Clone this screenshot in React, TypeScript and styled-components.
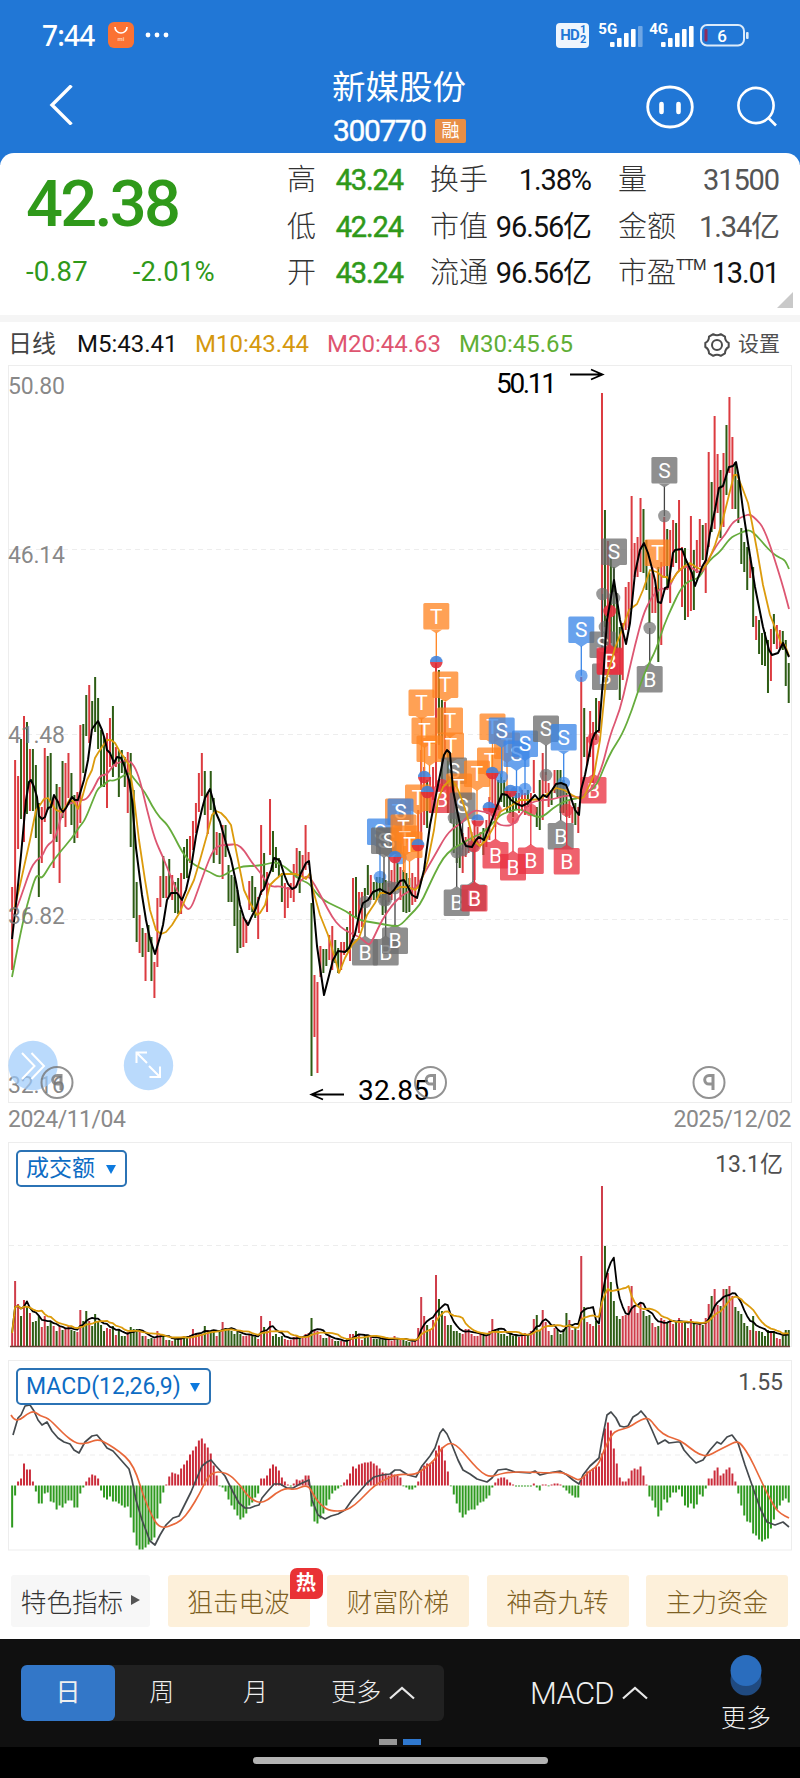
import React, { FC } from 'react';
import styled, { createGlobalStyle, css } from 'styled-components';

const colors = {
    blue: '#2177d6',
    up: '#dc3b40',
    down: '#2d5c14',
    price: '#2f991a',
    grey: '#8a8a8a',
    text: '#505050',
    line: '#ededed',
    link: '#0d6cc4',
    cream: '#fdf0da',
    brown: '#7d5f22',
};

const GlobalStyle = createGlobalStyle`
    * {
        box-sizing: border-box;
    }

    body {
        margin: 0;
        background: #fff;
        font-family: Roboto, 'Noto Sans CJK SC', sans-serif;
    }

    svg {
        display: block;
        flex-shrink: 0;
    }
`;

/* ---------- chart data, one entry per trading day ---------- */

const CANDLES = (
    'r887-970 r760-908 r776-849 g739-819 r716-842 g722-814 r749-811 g749-811 g765-838 g803-897 ' +
    'r807-863 r748-822 g756-810 g753-834 r797-868 g784-842 r787-883 g761-818 r763-827 r753-798 ' +
    'g773-825 g795-843 r792-838 r725-823 g724-773 g695-736 r685-743 g701-728 g677-732 g698-749 ' +
    'g730-787 g737-787 r733-808 r718-767 g706-777 r747-767 g750-797 g750-773 g757-787 r752-813 ' +
    'g753-847 g790-918 g882-942 r915-953 g928-957 r933-981 g925-952 g937-981 r962-998 r898-967 ' +
    'r876-907 g856-898 r876-898 g859-897 r875-900 g882-913 g878-914 r873-914 g847-879 g839-878 ' +
    'r836-863 r821-850 r803-833 r773-812 r753-796 g771-815 r792-834 g771-810 g798-863 r832-855 ' +
    'g833-864 r825-879 g825-857 g865-902 g875-902 g877-926 g890-953 g910-948 r917-947 r920-943 ' +
    'r881-910 g876-912 g887-918 r897-939 r825-895 g853-888 r872-912 r799-855 g831-872 g847-868 ' +
    'g858-877 g873-902 r883-918 r887-908 r883-898 r864-902 r848-878 g851-893 r855-877 r825-870 ' +
    'r852-865 g903-1076 r975-1037 r982-1073 r946-977 g949-973 g949-966 r935-960 r926-970 g940-963 ' +
    'g948-973 r942-970 r942-955 g927-952 r911-961 r878-937 g877-917 r892-933 r892-927 g888-920 ' +
    'g865-895 r875-900 g882-900 g877-900 g877-898 g878-915 g880-913 r883-902 r870-900 r857-890 ' +
    'g863-890 r867-900 g870-912 g873-913 g878-912 r873-905 r877-902 r810-887 r750-847 r767-825 ' +
    'g780-828 r777-813 r767-800 r663-787 g670-745 g700-793 r702-753 g750-813 g767-823 g780-853 ' +
    'g807-863 g820-868 r833-873 r837-857 r827-853 r832-847 r820-880 r827-847 r832-843 g828-855 ' +
    'r820-847 r797-840 r770-813 r773-827 g780-810 g773-802 g780-807 g787-813 g793-813 g797-817 ' +
    'g793-810 r793-813 r790-810 r793-815 g790-807 r793-813 r760-793 g807-827 g780-830 r753-820 ' +
    'r772-793 r783-807 g790-805 r770-793 g770-797 g770-813 g780-813 g793-817 r800-818 r807-823 ' +
    'g803-825 r807-833 r677-793 g708-757 r737-765 r711-757 r722-783 g698-740 r701-733 r393-663 ' +
    'g510-627 r541-680 g557-643 g567-660 g593-653 g627-700 r623-680 r587-630 r582-628 r496-607 ' +
    'r543-577 r537-577 r498-572 g509-573 g540-590 g573-623 r567-613 r587-613 g567-662 r562-645 ' +
    'r517-577 g529-590 r530-603 r520-567 g523-563 r500-570 r547-607 g548-620 r567-617 r516-611 ' +
    'g550-610 r540-573 r519-567 g525-560 r523-593 r452-547 g482-532 r416-529 r454-513 g470-538 ' +
    'r453-527 g425-495 r397-473 r437-509 g462-509 g480-523 g528-564 g542-572 g547-590 r557-578 ' +
    'g567-627 r616-640 g620-654 g633-665 g632-666 g640-693 r629-681 g614-644 r625-649 r630-648 ' +
    'g631-650 g640-686 g663-703'
)
    .split(' ')
    .map((c) => {
        const [top, bottom] = c.slice(1).split('-').map(Number);
        return { up: c[0] === 'r', top, bottom };
    });

const VOLUMES = [
    13, 65, 42, 30, 46, 40, 33, 24, 25, 30, 19, 30, 20, 25, 20, 15, 20, 16, 17, 20, 16, 15, 14, 36, 25,
    35, 25, 20, 32, 25, 21, 15, 18, 17, 20, 11, 16, 10, 10, 14, 19, 17, 17, 14, 10, 10, 7, 8, 7, 15,
    11, 11, 6, 6, 5, 9, 8, 9, 10, 9, 11, 17, 13, 13, 12, 20, 16, 15, 16, 10, 16, 24, 18, 16, 15,
    12, 14, 12, 10, 10, 12, 10, 9, 7, 30, 19, 15, 25, 10, 12, 9, 10, 7, 6, 6, 9, 10, 10, 10, 12,
    13, 28, 16, 15, 11, 8, 8, 10, 7, 5, 5, 5, 4, 7, 12, 12, 15, 12, 6, 10, 11, 9, 7, 7, 7,
    6, 8, 7, 5, 10, 7, 6, 7, 5, 4, 4, 6, 18, 49, 30, 21, 17, 26, 71, 47, 35, 30, 21, 21, 15,
    15, 13, 12, 17, 17, 12, 10, 10, 13, 10, 10, 15, 27, 17, 16, 12, 12, 10, 13, 10, 10, 9, 12, 13, 12,
    15, 27, 31, 16, 36, 24, 15, 11, 18, 16, 12, 17, 33, 26, 16, 19, 16, 90, 39, 24, 22, 20, 25, 21, 160,
    100, 73, 64, 45, 30, 27, 30, 31, 40, 60, 40, 33, 44, 35, 30, 31, 23, 19, 20, 28, 26, 24, 26, 22, 24,
    28, 23, 24, 18, 27, 22, 21, 23, 21, 28, 42, 50, 57, 41, 40, 57, 57, 60, 50, 39, 35, 32, 23, 20, 16,
    30, 15, 15, 14, 10, 16, 15, 15, 8, 7, 10, 16, 16,
];

const MACD_BARS = [
    -42, -10, 4, 7, 22, 16, 16, 4, -6, -18, -18, -8, -7, -16, -17, -24, -20, -22, -18, -15, -15, -22, -22, -8, -2,
    4, 8, 11, 10, 7, -5, -12, -14, -11, -16, -16, -18, -20, -22, -21, -32, -47, -60, -64, -64, -62, -59, -55, -52, -33,
    -18, -7, 1, 9, 13, 12, 11, 17, 21, 25, 31, 35, 39, 45, 47, 42, 38, 32, 20, 10, 0, -2, -6, -14, -20,
    -24, -30, -34, -32, -28, -20, -17, -12, -8, 7, 7, 10, 17, 21, 19, 15, 8, 4, 1, -1, 2, 6, 5, 6, 10,
    10, -21, -36, -38, -33, -28, -20, -14, -8, -5, -3, 0, 3, 6, 12, 19, 17, 21, 22, 23, 23, 24, 22, 20, 17,
    13, 12, 10, 12, 11, 10, 8, 0, -2, -4, -4, -2, 4, 16, 20, 22, 22, 24, 35, 40, 38, 25, 14, 0, -9,
    -18, -27, -32, -29, -25, -24, -24, -20, -17, -16, -13, -10, -2, 3, 7, 8, 8, 6, 3, 1, -1, -1, -1, -1, -1,
    -1, 2, -2, -5, 1, 1, 0, 1, 2, 2, 1, -2, -5, -8, -10, -12, -12, 7, 10, 14, 15, 17, 19, 19, 32,
    57, 63, 55, 37, 22, 8, 4, 4, 7, 15, 17, 16, 19, 10, 1, -11, -15, -22, -31, -25, -14, -17, -12, -7, -7,
    -4, -11, -20, -22, -18, -23, -19, -9, -11, -3, 7, 7, 15, 18, 10, 12, 16, 18, 12, 4, -8, -20, -30, -36, -37,
    -48, -50, -54, -56, -54, -53, -43, -34, -24, -20, -15, -13, -17,
];

const M5 =
    '12,939 17,895 21,855 26,800 29,782 31,780 34,787 37,797 39,816 42,819 45,817 48,808 51,807 54,795 58,802 60,808 63,812 66,808 72,797 75,800 78,800 84,780 88,760 92,729 95,725 98,721 102,730 105,740 107,750 110,753 114,763 117,757 121,758 124,765 129,780 132,800 136,848 142,895 146,920 150,939 155,954 160,937 163,925 167,900 171,893 177,893 182,900 186,890 191,868 196,836 199,822 202,809 205,798 210,789 213,800 216,813 220,822 226,843 231,859 236,882 240,905 244,918 248,925 251,918 256,908 261,892 264,889 267,880 271,870 274,858 277,859 280,861 284,874 288,884 292,889 296,887 301,873 306,863 309,861 312,890 317,946 324,995 333,960 338,951 345,952 349,948 355,934 359,915 363,903 368,900 373,892 380,889 385,892 390,894 394,890 400,881 404,880 408,887 412,895 417,898 420,886 424,870 430,825 437,790 441,770 444,755 447,750 450,753 453,790 458,815 463,840 466,846 472,847 476,840 479,837 484,840 490,825 497,806 502,794 507,795 511,800 517,804 522,806 528,803 535,795 539,800 543,795 547,797 552,790 556,784 561,783 566,785 570,795 575,810 579,815 581,790 585,775 592,740 595,733 599,730 603,680 607,620 614,580 620,620 626,644 630,623 635,573 640,550 644,543 648,553 655,580 658,602 661,603 665,588 668,587 673,553 675,550 682,549 686,560 692,573 695,586 702,567 706,560 710,533 715,510 719,488 723,486 727,473 729,467 733,466 736,462 739,478 743,510 748,543 755,587 763,627 769,650 772,655 778,653 783,643 789,657';
const M10 =
    '14,910 20,885 30,840 36,810 40,805 44,799 48,798 51,803 56,810 61,812 65,808 70,799 74,802 78,809 82,798 87,780 92,770 95,758 98,753 102,747 107,740 111,740 115,743 120,752 124,757 129,765 133,790 139,840 145,880 150,910 156,930 161,934 166,932 172,925 180,912 187,895 194,880 200,860 207,835 212,815 216,811 221,813 226,818 231,825 234,840 240,870 244,890 250,903 257,915 260,913 265,905 270,885 275,880 282,874 288,874 296,874 301,876 306,879 310,873 313,890 320,915 328,935 334,955 339,973 345,958 352,945 359,938 367,915 375,903 380,893 390,893 400,887 408,887 415,890 420,885 428,860 434,830 438,800 443,787 450,780 456,785 462,800 467,815 473,840 480,846 486,840 493,828 500,812 507,808 514,804 520,800 530,800 540,799 550,792 556,788 564,790 572,795 580,799 584,797 594,775 600,740 606,680 615,648 622,630 629,610 637,604 643,590 650,570 657,572 663,577 667,577 671,582 677,573 683,567 690,563 696,567 702,570 708,562 715,545 722,523 729,495 734,475 737,475 742,487 748,503 752,523 757,550 763,585 770,615 776,630 781,643 785,645 789,656';
const M20 =
    '14,915 20,900 30,870 36,860 42,857 47,845 55,840 60,820 66,805 72,803 80,800 86,800 93,790 100,775 107,775 113,765 120,762 128,760 134,765 140,780 147,810 155,840 163,857 170,875 178,893 186,909 191,909 198,890 205,870 213,850 220,845 228,845 237,844 244,850 252,863 260,872 266,882 272,887 280,886 288,889 294,889 301,880 308,875 315,885 323,900 332,917 340,927 350,933 360,937 366,943 370,945 375,935 382,920 392,905 402,895 412,890 418,885 425,872 435,855 445,837 453,828 462,823 470,813 476,810 483,812 490,812 497,824 505,826 513,825 520,815 530,803 540,800 550,800 560,797 570,795 577,798 585,795 593,787 602,768 610,735 620,710 627,680 635,645 643,615 650,600 656,592 662,588 668,590 675,575 681,568 690,566 697,572 703,572 708,560 718,543 725,535 732,523 738,519 744,516 750,514 757,520 763,527 770,545 778,570 784,590 789,609';
const M30 =
    '12,977 20,935 27,905 35,878 38,875 42,879 50,865 60,852 72,838 80,826 85,820 93,800 98,788 104,785 109,780 113,781 120,778 126,774 130,773 135,780 145,792 152,806 160,818 167,824 175,838 182,852 190,862 200,868 210,872 218,877 225,875 232,870 243,866 257,866 267,864 275,862 284,866 292,873 300,880 309,883 316,893 323,900 335,906 346,911 358,920 370,922 382,924 392,926 400,926 410,915 420,905 427,890 435,873 443,858 452,849 463,843 473,837 483,833 493,823 500,815 508,812 517,809 525,811 535,817 543,817 553,808 563,802 572,799 580,798 587,793 597,785 605,765 612,750 622,735 632,710 640,685 648,665 656,650 664,625 672,607 680,590 687,582 693,580 700,577 706,565 713,557 720,552 730,538 738,534 745,531 750,530 757,536 763,543 772,553 780,558 785,560 789,569';
const DIF =
    '13,1435 18,1418 21,1415 25,1406 30,1405 34,1411 38,1420 42,1425 47,1422 52,1431 58,1438 64,1442 70,1444 74,1450 79,1453 85,1442 92,1436 97,1435 102,1441 107,1448 113,1451 121,1460 129,1469 132,1480 136,1500 142,1520 150,1541 155,1545 160,1535 166,1525 173,1518 179,1516 185,1504 191,1492 196,1480 202,1466 207,1462 211,1460 216,1466 225,1476 233,1492 239,1503 245,1508 250,1508 255,1506 259,1505 262,1498 267,1492 274,1484 280,1484 287,1488 293,1488 300,1484 309,1480 312,1500 318,1515 325,1519 331,1516 338,1514 345,1510 352,1500 360,1491 367,1483 374,1477 382,1475 390,1474 395,1470 400,1470 408,1475 416,1477 422,1466 430,1456 435,1448 440,1433 443,1429 447,1434 452,1445 458,1460 463,1470 470,1474 477,1479 487,1482 492,1478 498,1470 506,1469 515,1472 530,1473 535,1471 540,1475 548,1473 560,1471 567,1475 573,1480 579,1484 583,1475 590,1466 599,1458 602,1440 607,1415 611,1412 616,1418 620,1426 624,1427 628,1426 633,1417 638,1414 641,1411 646,1417 652,1430 658,1444 665,1440 669,1443 677,1442 680,1442 684,1450 690,1457 696,1463 703,1460 710,1450 717,1442 721,1444 727,1437 732,1435 738,1443 745,1465 752,1485 760,1508 767,1522 775,1525 783,1522 789,1527';
const DEA =
    '11,1415 14,1420 20,1420 27,1414 34,1411 40,1416 48,1418 58,1428 66,1436 74,1442 80,1444 88,1443 98,1439 108,1444 120,1452 130,1461 137,1475 143,1495 151,1514 157,1525 164,1528 172,1525 181,1521 190,1510 200,1493 207,1478 214,1472 222,1472 230,1475 240,1485 247,1495 253,1500 260,1503 268,1500 276,1493 286,1488 295,1490 308,1484 315,1498 322,1506 330,1511 345,1511 355,1505 365,1495 375,1485 388,1478 398,1474 415,1475 425,1468 435,1460 440,1450 446,1445 450,1443 456,1445 463,1452 473,1464 482,1473 490,1477 500,1474 510,1472 530,1472 548,1473 562,1472 572,1477 580,1481 588,1472 598,1466 604,1450 612,1434 618,1430 628,1428 637,1422 645,1418 650,1419 658,1430 668,1437 680,1440 690,1448 700,1455 708,1456 717,1451 727,1446 737,1441 742,1445 750,1457 758,1474 767,1493 775,1508 781,1514 789,1518';

const xOf = (i: number) => 12.1 + 2.964 * i;

const smooth = (points: string) => {
    const p = points.split(' ').map((s) => s.split(',').map(Number));
    let d = `M${p[0][0]} ${p[0][1]}`;
    for (let i = 1; i < p.length - 1; i++) {
        const mx = (p[i][0] + p[i + 1][0]) / 2;
        const my = (p[i][1] + p[i + 1][1]) / 2;
        d += `Q${p[i][0]} ${p[i][1]} ${mx} ${my}`;
    }
    const last = p[p.length - 1];
    return `${d}L${last[0]} ${last[1]}`;
};

const VOLUME_BASE = 1346;

const average = (days: number) =>
    VOLUMES.map((_, i) => {
        const part = VOLUMES.slice(Math.max(0, i - days + 1), i + 1);
        const value = part.reduce((a, b) => a + b, 0) / part.length;
        return `${xOf(i)},${VOLUME_BASE - value}`;
    }).join(' ');

/* ---------- trade marks ---------- */

type MarkColor = 'orange' | 'blue' | 'grey' | 'red';

const markFill: Record<MarkColor, string> = {
    orange: '#ff8420',
    blue: '#3a86e8',
    grey: '#6d6d6d',
    red: '#ea3040',
};

// letter, colour, centre x, centre y, y of the dot
const MARKS: [string, MarkColor, number, number, number][] = [
    ['T', 'orange', 436.3, 616.5, 662],
    ['T', 'orange', 445.3, 685, 700],
    ['T', 'orange', 421.5, 703, 777],
    ['T', 'orange', 450, 721, 740],
    ['T', 'orange', 424.5, 731, 792],
    ['T', 'orange', 451, 746, 760],
    ['T', 'orange', 429.5, 749, 775],
    ['S', 'grey', 454, 771, 818],
    ['T', 'orange', 459, 787, 800],
    ['B', 'red', 441.5, 800, 785],
    ['S', 'grey', 462.6, 806, 850],
    ['T', 'orange', 492.5, 727, 773],
    ['T', 'orange', 490, 761, 800],
    ['T', 'orange', 477, 774, 820],
    ['T', 'orange', 507, 746, 790],
    ['S', 'blue', 501.7, 731, 777],
    ['S', 'blue', 516.5, 754, 792],
    ['S', 'blue', 525, 744, 789],
    ['S', 'grey', 546, 729, 775],
    ['S', 'blue', 563.7, 737.5, 783],
    ['T', 'orange', 418, 798, 845],
    ['T', 'orange', 398, 812, 860],
    ['S', 'blue', 400.5, 812, 858],
    ['S', 'blue', 380, 832, 877],
    ['S', 'grey', 384, 841, 900],
    ['S', 'grey', 389, 841, 887],
    ['T', 'orange', 403.5, 828, 872],
    ['T', 'orange', 405, 839, 880],
    ['T', 'orange', 409.5, 845, 885],
    ['B', 'grey', 365, 952.5, 902],
    ['B', 'grey', 385.7, 952.5, 900],
    ['B', 'grey', 395, 941, 888],
    ['B', 'grey', 456.7, 903, 852],
    ['B', 'grey', 473, 898, 846],
    ['B', 'red', 474.5, 898.5, 846],
    ['B', 'red', 495.5, 855.5, 810],
    ['B', 'red', 513, 867.5, 818],
    ['B', 'red', 530.8, 861, 810],
    ['B', 'grey', 560.7, 836.5, 790],
    ['B', 'red', 566.7, 861.5, 810],
    ['B', 'red', 593.5, 790.5, 739],
    ['S', 'blue', 581.3, 630, 675.7],
    ['S', 'grey', 602.5, 645, 594],
    ['B', 'grey', 605, 677, 627],
    ['B', 'red', 609.5, 661, 611],
    ['B', 'red', 610, 662, 611],
    ['S', 'grey', 614, 552, 598],
    ['T', 'orange', 657.5, 553, 602],
    ['S', 'grey', 664.4, 470.5, 516],
    ['B', 'grey', 649.7, 679.5, 628],
];

const HALF_DOTS = [
    [436.3, 662],
    [424.3, 777],
    [427.3, 792],
    [418, 845],
    [395, 857],
    [492.3, 773],
    [489, 808],
    [477.7, 820.5],
    [510.5, 791],
];

/* ---------- icons ---------- */

const Caret: FC = () => (
    <svg width="26" height="14" viewBox="0 0 26 14" fill="none" stroke="#e8e8e8" strokeWidth="2.2">
        <path d="M1 12.5 13 2l12 10.5" />
    </svg>
);

const Gear: FC = () => (
    <svg width="26" height="26" viewBox="0 0 26 26" fill="none" stroke="#4b4b4b" strokeWidth="2">
        <path
            d="M9.2 2.2Q13 4.5 16.8 2.2L21 4.7Q21 9 24.7 11V15Q21 17 21 21.3L16.8 23.8Q13 21.5 9.2 23.8L5 21.3Q5 17 1.3 15V11Q5 9 5 4.7Z"
            strokeLinejoin="round"
        />
        <circle cx="13" cy="13" r="5" />
    </svg>
);

const Signal: FC<{ faded?: boolean }> = ({ faded }) => (
    <svg width="33" height="22" viewBox="0 0 33 22" fill="#fff">
        {[5, 9, 14, 18, 21].map((h, i) => (
            <rect
                key={h}
                x={i * 7}
                y={22 - h}
                width="4.6"
                height={h}
                rx="1"
                opacity={faded && i === 4 ? 0.35 : 1}
            />
        ))}
    </svg>
);

/* ---------- header ---------- */

const Header = styled.header`
    height: 165px;
    background: ${colors.blue};
    color: #fff;
`;

const StatusBar = styled.div`
    display: flex;
    align-items: center;
    height: 70px;
    padding: 0 51px 0 42px;
`;

const Clock = styled.span`
    font: 500 28px 'Noto Sans', sans-serif;
    letter-spacing: -0.8px;
    width: 66px;
`;

const StatusRight = styled.div`
    display: flex;
    align-items: center;
    margin-left: auto;
    gap: 9px;
`;

const HdBadge = styled.div`
    display: flex;
    align-items: center;
    justify-content: center;
    width: 33px;
    height: 25px;
    border-radius: 4px;
    background: #eef5fd;
    color: ${colors.blue};
    font-size: 15px;
    font-weight: 700;
    letter-spacing: -0.8px;
`;

const HdDigits = styled.span`
    display: flex;
    flex-direction: column;
    font-size: 11px;
    line-height: 10px;
    margin-left: 1px;
`;

const Network = styled.div`
    display: flex;
    align-items: flex-end;
    height: 24px;
    margin-right: -3px;
`;

const NetworkLabel = styled.span`
    align-self: flex-start;
    font-size: 15px;
    line-height: 12px;
    font-weight: 700;
    margin-right: -7px;
`;

const TitleBar = styled.div`
    display: grid;
    grid-template-columns: 332px 134px 1fr;
    height: 83px;
`;

const BackButton = styled.div`
    padding: 15px 0 0 48px;
`;

const TitleBlock = styled.div`
    display: flex;
    flex-direction: column;
`;

const StockName = styled.div`
    font-size: 33.5px;
    line-height: 36px;
    white-space: nowrap;
`;

const StockCode = styled.div`
    display: flex;
    align-items: center;
    justify-content: space-between;
    padding-left: 1px;
    font-size: 30px;
    line-height: 30px;
    letter-spacing: -1.4px;
    -webkit-text-stroke: 0.4px #fff;
    margin-top: 10px;
`;

const MarginTag = styled.span`
    width: 31px;
    height: 24px;
    border-radius: 2px;
    background: #e88e45;
    font-size: 18px;
    line-height: 23px;
    text-align: center;
    letter-spacing: 0;
    -webkit-text-stroke: 0;
`;

const HeaderIcons = styled.div`
    display: flex;
    align-items: flex-start;
    justify-content: flex-end;
    gap: 42px;
    padding: 15px 22px 0 0;
`;

/* ---------- quote ---------- */

const Quote = styled.section`
    display: grid;
    grid-template-columns: 260px 116px 161px 161px;
    column-gap: 27px;
    height: 162px;
    margin-top: -12px;
    padding-top: 4px;
    background: #fff;
    border-radius: 14px 14px 0 0;
    position: relative;
`;

const PriceBlock = styled.div`
    padding: 8px 0 0 26px;
    color: ${colors.price};
`;

const Price = styled.div`
    font-size: 65px;
    font-weight: 500;
    line-height: 78px;
    letter-spacing: -2.7px;
`;

const Changes = styled.div`
    display: flex;
    gap: 45px;
    margin-top: 13px;
    font-size: 27.5px;
    line-height: 32px;
    letter-spacing: 0.1px;
`;

const QuoteColumn = styled.div`
    display: flex;
    flex-direction: column;
`;

const QuoteRow = styled.div`
    display: flex;
    justify-content: space-between;
    height: 46.5px;
    line-height: 46px;
    white-space: nowrap;
`;

const QuoteLabel = styled.span`
    font-size: 29px;
    font-weight: 300;
    color: #333;

    sup {
        font-size: 15.5px;
        font-weight: 400;
        line-height: 0;
        letter-spacing: -0.8px;
        vertical-align: 13px;
    }
`;

const QuoteValue = styled.span<{ color: string }>`
    font-size: 29px;
    letter-spacing: -1.1px;
    color: ${({ color }) => color};
    -webkit-text-stroke: ${({ color }) => (color === colors.price ? 0.5 : 0)}px ${colors.price};
`;

const Corner = styled.i`
    position: absolute;
    right: 7px;
    bottom: 7px;
    border: 8px solid transparent;
    border-right-color: #c9c9c9;
    border-bottom-color: #c9c9c9;
`;

const Strip = styled.div`
    height: 7px;
    background: #f5f5f5;
`;

/* ---------- charts ---------- */

const Legend = styled.div`
    display: flex;
    align-items: center;
    height: 43px;
    padding: 2px 20px 0 8px;
    font-size: 24px;
    line-height: 41px;
    white-space: nowrap;
`;

const LegendItem = styled.span<{ color: string; width: number }>`
    width: ${({ width }) => width}px;
    color: ${({ color }) => color};
`;

const Settings = styled.div`
    display: flex;
    align-items: center;
    gap: 8px;
    margin-left: auto;
    font-size: 21px;
    color: ${colors.text};
`;

const Dates = styled.div`
    display: flex;
    justify-content: space-between;
    height: 39px;
    padding: 1px 9px 0 8px;
    font-size: 23px;
    line-height: 32px;
    letter-spacing: -0.5px;
    color: ${colors.grey};
`;

const ChartPanel = styled.section`
    position: relative;
`;

const IndicatorButton = styled.button<{ width: number }>`
    position: absolute;
    left: 16px;
    top: 8px;
    display: flex;
    align-items: center;
    justify-content: space-between;
    width: ${({ width }) => width}px;
    height: 37px;
    padding: 1px 9px 0 8px;
    border: 2px solid #2b73b5;
    border-radius: 5px;
    background: #fff;
    color: ${colors.link};
    font-family: inherit;
    font-size: 23px;
    line-height: 30px;
    white-space: nowrap;
`;

const DownArrow = styled.i`
    border: 5.5px solid transparent;
    border-top: 9px solid #0d7ade;
    border-bottom: 0;
`;

const PanelValue = styled.span`
    position: absolute;
    right: 17px;
    top: 7px;
    font-size: 23px;
    line-height: 32px;
    color: ${colors.text};
`;

/* ---------- footer ---------- */

const Chips = styled.div`
    display: flex;
    justify-content: space-between;
    padding: 24px 12px 12px 11px;
`;

const Chip = styled.div<{ plain?: boolean }>`
    position: relative;
    display: flex;
    align-items: center;
    justify-content: center;
    gap: 8px;
    width: 142px;
    height: 52px;
    padding-bottom: 2px;
    border-radius: 3px;
    background: ${colors.cream};
    color: ${colors.brown};
    font-size: 25.6px;
    font-weight: 300;

    ${({ plain }) =>
        plain &&
        css`
            width: 139px;
            background: #f7f7f7;
            color: #333;
        `}
`;

const RightArrow = styled.i`
    border: 5.5px solid transparent;
    border-left: 9px solid #555;
    border-right: 0;
`;

const HotBadge = styled.span`
    position: absolute;
    left: 122px;
    top: -7px;
    width: 33px;
    height: 31px;
    border-radius: 7px 7px 7px 0;
    background: #e93235;
    color: #fff;
    font-size: 20px;
    font-weight: 700;
    line-height: 30px;
    text-align: center;
`;

const BottomBar = styled.nav`
    display: flex;
    flex-direction: column;
    height: 108px;
    background: #101010;
    color: #efefef;
    font-size: 25px;
`;

const BottomRow = styled.div`
    display: flex;
    height: 100px;
`;

const Periods = styled.div`
    display: flex;
    width: 423px;
    height: 56px;
    margin: 26px 0 0 21px;
    border-radius: 6px;
    background: #212121;
`;

const Period = styled.div<{ active?: boolean; wide?: boolean }>`
    display: flex;
    align-items: center;
    justify-content: center;
    gap: 8px;
    width: ${({ wide }) => (wide ? 142 : 94)}px;
    border-radius: 6px;
    background: ${({ active }) => (active ? '#3377c8' : 'transparent')};
    font-weight: ${({ active }) => (active ? 400 : 300)};
    line-height: 54px;
`;

const IndicatorTab = styled.div`
    display: flex;
    align-items: center;
    gap: 8px;
    height: 56px;
    margin: 26px 0 0 86px;
    font: 300 31px Roboto, sans-serif;
    letter-spacing: -0.7px;
`;

const MoreTab = styled.div`
    display: flex;
    flex-direction: column;
    align-items: center;
    gap: 8px;
    width: 50px;
    margin: 16px 29px 0 auto;
    font-weight: 300;
    line-height: 30px;
    white-space: nowrap;
`;

const Pager = styled.div`
    display: flex;
    justify-content: center;
    gap: 6px;
`;

const PagerDot = styled.i<{ active?: boolean }>`
    width: 18px;
    height: 6px;
    background: ${({ active }) => (active ? '#2f78cf' : '#979797')};
`;

const HomeArea = styled.div`
    height: 31px;
    padding-top: 10px;
    background: #000;
`;

const HomeBar = styled.div`
    width: 295px;
    height: 7px;
    margin: 0 auto;
    border-radius: 4px;
    background: #b3b3b3;
`;

/* ---------- drawing parts ---------- */

const Frame: FC<{ top: number; bottom: number; grid: number[] }> = ({ top, bottom, grid }) => (
    <g fill="none" stroke={colors.line}>
        <rect x="8.5" y={top} width="783" height={bottom - top} />
        {grid.map((y) => (
            <path key={y} d={`M9 ${y}H791`} strokeDasharray="5 4" />
        ))}
    </g>
);

const Mark: FC<{ mark: (typeof MARKS)[number] }> = ({ mark }) => {
    const [letter, color, x, y, dot] = mark;
    const fill = markFill[color];
    const s = letter === 'B' ? -1 : 1;
    return (
        <g>
            <path
                d={`M${x} ${y + s * 16}V${dot}`}
                stroke={color === 'grey' ? '#444' : fill}
                strokeWidth="1.3"
            />
            {letter !== 'T' && <circle cx={x} cy={dot} r="6.3" fill={fill} opacity="0.7" />}
            <g fill={fill} opacity="0.76">
                <rect x={x - 13} y={y - 13.5} width="26" height="26.5" rx="1.5" />
                <path d={`M${x - 6} ${y + s * 13}l6 ${s * 4} 6 ${-s * 4}z`} />
            </g>
            <text x={x} y={y + 7} textAnchor="middle" fontSize="21" fontWeight="400" fill="#fff">
                {letter}
            </text>
        </g>
    );
};

const AXIS: [string, number][] = [
    ['50.80', 393.5],
    ['46.14', 562.5],
    ['41.48', 743],
    ['36.82', 924],
    ['32.16', 1093],
];

const PriceChart: FC = () => (
    <svg width="800" height="738" viewBox="0 365 800 738">
        <Frame top={365.5} bottom={1102.5} grid={[549.5, 734.5, 919.5]} />
        {CANDLES.map(({ up, top, bottom }, i) => (
            <rect
                key={i}
                x={xOf(i) - 0.95}
                y={top}
                width="2"
                height={bottom - top}
                fill={up ? colors.up : colors.down}
            />
        ))}
        {MARKS.map((mark, i) => (
            <Mark key={i} mark={mark} />
        ))}
        {HALF_DOTS.map(([x, y]) => (
            <g key={`${x}-${y}`} opacity="0.88">
                <path d={`M${x - 6.3} ${y}a6.3 6.3 0 0 1 12.6 0z`} fill="#3f82dc" />
                <path d={`M${x - 6.3} ${y}a6.3 6.3 0 0 0 12.6 0z`} fill="#e02c38" />
            </g>
        ))}
        <g fill="none" strokeWidth="1.8" strokeLinejoin="round">
            <path d={smooth(M30)} stroke="#66ac3c" />
            <path d={smooth(M20)} stroke="#dd5672" />
            <polyline points={M10} stroke="#dc9b0c" />
            <polyline points={M5} stroke="#000" strokeWidth="2" />
        </g>
        <g fill="#777" fillOpacity="0.88" fontSize="23" letterSpacing="-0.2">
            {AXIS.map(([label, y]) => (
                <text key={label} x="8" y={y}>
                    {label}
                </text>
            ))}
        </g>
        <g fill="none" stroke="#000" strokeWidth="1.8">
            <path d="M570 374.5H602M591 369.5l11.5 5-11.5 5" />
            <path d="M344 1094.5H312M323 1089.5l-11.5 5 11.5 5" />
        </g>
        <g fill="#000" fontSize="28">
            <text x="496" y="392.5" textLength="61">
                50.11
            </text>
            <text x="358" y="1100" textLength="71">
                32.85
            </text>
        </g>
        <g fill="#9ccbfb" fillOpacity="0.7">
            <circle cx="33" cy="1065.5" r="24.7" />
            <circle cx="148.5" cy="1065.5" r="24.7" />
        </g>
        <g fill="none" stroke="#fff" strokeWidth="2">
            <path d="M22 1053l12.5 13-12.5 13M31.5 1053l12.5 13-12.5 13" />
            <path d="M136.5 1063v-10.5H147M137 1053l10 10M160 1066.5v10.5h-10.5M159.5 1076.5l-10.5-10.5" />
        </g>
        {[57, 430.5, 709].map((x) => (
            <g key={x} fill="none" stroke="#777" strokeWidth="2" opacity="0.8">
                <circle cx={x} cy="1082.5" r="15.5" />
                <path d={`M${x + 4} 1090v-14.5h-4a4.3 4.3 0 0 0 0 8.6h4`} strokeWidth="3" />
            </g>
        ))}
    </svg>
);

const VolumeChart: FC = () => (
    <svg width="800" height="218" viewBox="0 1142 800 218">
        <Frame top={1142.5} bottom={1346.5} grid={[1245.5]} />
        {VOLUMES.map((v, i) => (
            <rect
                key={i}
                x={xOf(i) - 0.95}
                y={VOLUME_BASE - v}
                width="2"
                height={v}
                fill={CANDLES[i].up ? '#cf3d4a' : colors.down}
            />
        ))}
        <path d="M10 1346.5H790" stroke="#6b4038" strokeWidth="1.5" />
        <g fill="none" strokeWidth="1.8" strokeLinejoin="round">
            <polyline points={average(5)} stroke="#000" />
            <polyline points={average(10)} stroke="#dc9b0c" />
        </g>
    </svg>
);

const MacdChart: FC = () => (
    <svg width="800" height="191" viewBox="0 1360 800 191">
        <Frame top={1360.5} bottom={1550} grid={[1455]} />
        {MACD_BARS.map((v, i) => (
            <rect
                key={i}
                x={xOf(i) - 0.95}
                y={v > 0 ? 1485.5 - v : 1485.5}
                width="2"
                height={Math.max(Math.abs(v), 0.8)}
                fill={v > 0 ? '#cb2c3b' : '#2f9a20'}
            />
        ))}
        <g fill="none" strokeWidth="1.7" strokeLinejoin="round">
            <polyline points={DIF} stroke="#454a4e" />
            <path d={smooth(DEA)} stroke="#e8683a" />
        </g>
    </svg>
);

const QUOTES: [React.ReactNode, string, string][][] = [
    [
        ['高', '43.24', colors.price],
        ['低', '42.24', colors.price],
        ['开', '43.24', colors.price],
    ],
    [
        ['换手', '1.38%', '#111'],
        ['市值', '96.56亿', '#111'],
        ['流通', '96.56亿', '#111'],
    ],
    [
        ['量', '31500', '#555'],
        ['金额', '1.34亿', '#555'],
        [
            <>
                市盈<sup>TTM</sup>
            </>,
            '13.01',
            '#111',
        ],
    ],
];

const App: FC = () => (
    <>
        <GlobalStyle />
        <Header>
            <StatusBar>
                <Clock>7:44</Clock>
                <svg width="62" height="26" viewBox="0 0 62 26">
                    <rect width="26" height="26" rx="6" fill="#fb7233" />
                    <path d="M7 5a6 6 0 0 0 12 0" fill="none" stroke="#fff" strokeWidth="1.7" />
                    <text x="13" y="19" fontSize="6" fontWeight="700" fill="#ffd0b4" textAnchor="middle">
                        mi
                    </text>
                    <g fill="#fff">
                        <circle cx="40" cy="13" r="2.4" />
                        <circle cx="49" cy="13" r="2.4" />
                        <circle cx="58" cy="13" r="2.4" />
                    </g>
                </svg>
                <StatusRight>
                    <HdBadge>
                        HD
                        <HdDigits>
                            <span>1</span>
                            <span>2</span>
                        </HdDigits>
                    </HdBadge>
                    <Network>
                        <NetworkLabel>5G</NetworkLabel>
                        <Signal faded />
                    </Network>
                    <Network>
                        <NetworkLabel>4G</NetworkLabel>
                        <Signal />
                    </Network>
                    <svg width="49" height="23" viewBox="0 0 49 23" fill="none">
                        <rect x="1" y="1" width="43" height="20.5" rx="6" stroke="#dcebfa" strokeWidth="2" />
                        <rect x="4.5" y="5" width="3" height="12.5" rx="1" fill="#8e2c5c" />
                        <rect x="46" y="8" width="2.6" height="7" rx="1" fill="#dcebfa" />
                        <text x="22" y="17.5" fontSize="17" fontWeight="500" fill="#fff" textAnchor="middle">
                            6
                        </text>
                    </svg>
                </StatusRight>
            </StatusBar>
            <TitleBar>
                <BackButton>
                    <svg width="26" height="40" viewBox="0 0 26 40" fill="none" stroke="#fff" strokeWidth="3.4">
                        <path d="M23.5 0.5 4 20l19.5 19.5" />
                    </svg>
                </BackButton>
                <TitleBlock>
                    <StockName>新媒股份</StockName>
                    <StockCode>
                        300770 <MarginTag>融</MarginTag>
                    </StockCode>
                </TitleBlock>
                <HeaderIcons>
                    <svg width="48" height="44" viewBox="0 0 48 44" fill="none" stroke="#fff">
                        <ellipse cx="24" cy="22" rx="22.3" ry="20" strokeWidth="2.8" />
                        <path d="M15.5 19v8M32.5 19v8" strokeWidth="4.6" strokeLinecap="round" />
                    </svg>
                    <svg width="42" height="44" viewBox="0 0 42 44" fill="none" stroke="#fff" strokeWidth="2.6">
                        <circle cx="20" cy="20.5" r="17.6" />
                        <path d="M32 32.5l8 8" />
                    </svg>
                </HeaderIcons>
            </TitleBar>
        </Header>

        <Quote>
            <PriceBlock>
                <Price>42.38</Price>
                <Changes>
                    <span>-0.87</span>
                    <span>-2.01%</span>
                </Changes>
            </PriceBlock>
            {QUOTES.map((column, c) => (
                <QuoteColumn key={c}>
                    {column.map(([label, value, color], r) => (
                        <QuoteRow key={r}>
                            <QuoteLabel>{label}</QuoteLabel>
                            <QuoteValue color={color}>{value}</QuoteValue>
                        </QuoteRow>
                    ))}
                </QuoteColumn>
            ))}
            <Corner />
        </Quote>
        <Strip />

        <Legend>
            <LegendItem color="#444" width={69}>
                日线
            </LegendItem>
            <LegendItem color="#111" width={118}>
                M5:43.41
            </LegendItem>
            <LegendItem color="#d5980e" width={132}>
                M10:43.44
            </LegendItem>
            <LegendItem color="#de5570" width={132}>
                M20:44.63
            </LegendItem>
            <LegendItem color="#5fae35" width={120}>
                M30:45.65
            </LegendItem>
            <Settings>
                <Gear />
                设置
            </Settings>
        </Legend>
        <PriceChart />
        <Dates>
            <span>2024/11/04</span>
            <span>2025/12/02</span>
        </Dates>
        <ChartPanel>
            <VolumeChart />
            <IndicatorButton width={111}>
                成交额 <DownArrow />
            </IndicatorButton>
            <PanelValue>13.1亿</PanelValue>
        </ChartPanel>
        <ChartPanel>
            <MacdChart />
            <IndicatorButton width={195}>
                MACD(12,26,9) <DownArrow />
            </IndicatorButton>
            <PanelValue>1.55</PanelValue>
        </ChartPanel>

        <Chips>
            <Chip plain>
                特色指标
                <RightArrow />
            </Chip>
            <Chip>
                狙击电波
                <HotBadge>热</HotBadge>
            </Chip>
            <Chip>财富阶梯</Chip>
            <Chip>神奇九转</Chip>
            <Chip>主力资金</Chip>
        </Chips>
        <BottomBar>
            <BottomRow>
                <Periods>
                    <Period active>日</Period>
                    <Period>周</Period>
                    <Period>月</Period>
                    <Period wide>
                        更多
                        <Caret />
                    </Period>
                </Periods>
                <IndicatorTab>
                    MACD
                    <Caret />
                </IndicatorTab>
                <MoreTab>
                    <svg width="32" height="41" viewBox="0 0 32 41">
                        <circle cx="16" cy="25" r="15.5" fill="#204a80" />
                        <circle cx="16" cy="15.5" r="15.5" fill="#2a6dbe" />
                    </svg>
                    更多
                </MoreTab>
            </BottomRow>
            <Pager>
                <PagerDot />
                <PagerDot active />
            </Pager>
        </BottomBar>
        <HomeArea>
            <HomeBar />
        </HomeArea>
    </>
);

export default App;
